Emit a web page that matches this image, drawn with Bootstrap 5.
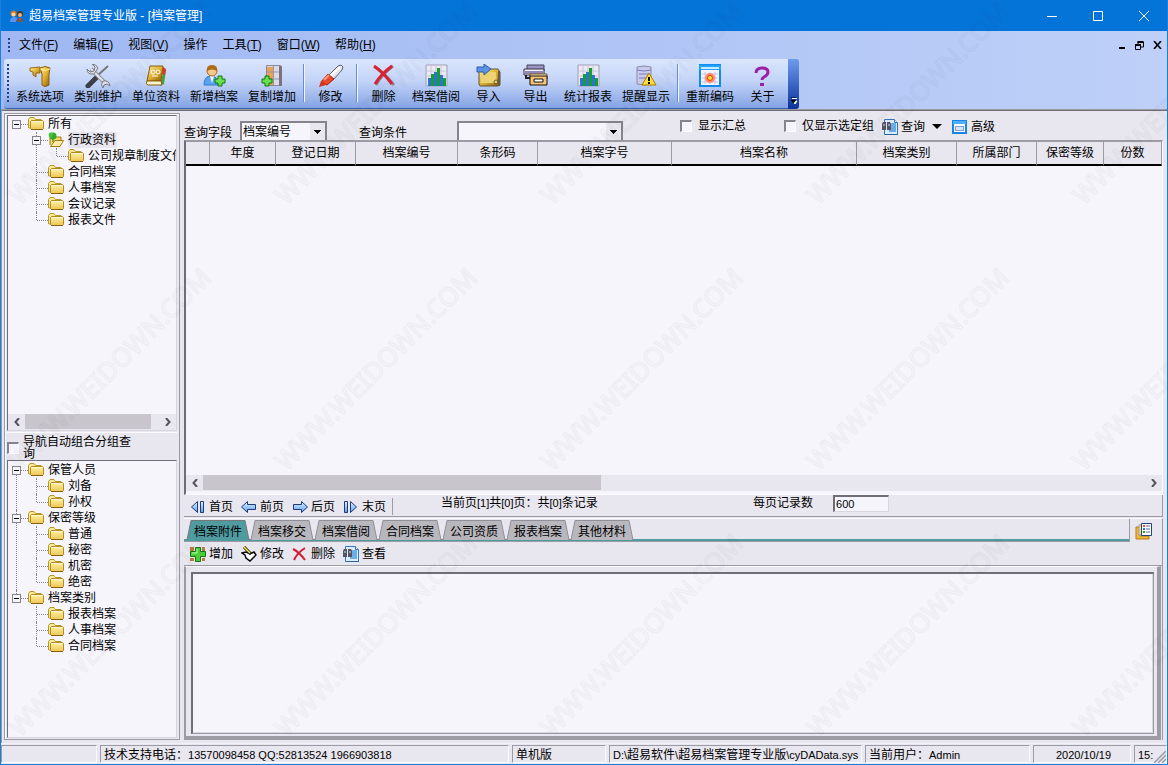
<!DOCTYPE html>
<html lang="zh-CN">
<head>
<meta charset="utf-8">
<meta name="viewport" content="width=device-width, initial-scale=1">
<title>超易档案管理专业版 - [档案管理]</title>
<link href="https://cdn.jsdelivr.net/npm/bootstrap@5.3.0/dist/css/bootstrap.min.css" rel="stylesheet">
<style>
:root{--face:#e8e6ee;--paper:#f7f5fc;--edge:#9c9aa3;--dark:#6f6d76;--lite:#fbfaff}
body{font:12px/16px "Liberation Sans","Noto Sans CJK SC",sans-serif;color:#000;background:var(--face)}
button,select,input{font:inherit;color:inherit;border-radius:0}
button{background:none;border:0;padding:0;white-space:nowrap}
.app{border:1px solid #1a7fdc;border-top:0;overflow:hidden}
svg{flex:none;display:block}
.defs{position:absolute}
/* title and menu */
.titlebar{height:31px;background:#0574d9;color:#fff;padding-left:8px}
.win-btn{width:46px;height:31px}
.menubar{height:28px;background:linear-gradient(90deg,#9fb8f3,#bed0f8);padding-left:7px}
.menubar .items{gap:15px;margin-left:9px}
.grip{width:2px;background:repeating-linear-gradient(#27408b 0 2px,transparent 2px 4px)}
.mdi{gap:9px;padding-right:5px}
/* big toolbar */
.bandrow{height:50px;background:linear-gradient(90deg,#9fb8f3,#bed0f8);padding-left:3px}
.band{background:linear-gradient(#dbe6fd,#c3d4f8 45%,#84a3e4);border-bottom:1px solid #3b61b1;border-radius:3px 0 0 3px;padding-left:3px;width:784px}
.tool{width:47px;padding-top:5px}
.tool.wide{width:58px}
.tool svg{margin:0 auto 1px}
.tool span{display:block}
.vsep{width:2px;height:38px;margin:5px 2px 0;border-left:1px solid #6a8cd0;border-right:1px solid #f2f6ff}
.more{width:11px;background:linear-gradient(#6f9bee,#0a3399);border-radius:0 3px 3px 0}
/* workspace */
.work{border-top:1px solid var(--edge);border-left:1px solid var(--edge);box-shadow:inset 0 1px var(--dark);padding:3px 4px 3px 2px;gap:4px}
.side{width:176px;border:1px solid var(--edge);padding:1px 2px;box-shadow:inset 1px 1px var(--lite)}
.sunk{background:var(--paper);border:1px solid #d8d6de;border-top-color:var(--dark);border-left-color:var(--dark)}
.tree2{flex:0 0 278px;padding-top:1px}
.tree,.tree ul{list-style:none;margin:0;padding:0}
.tree ul{padding-left:20px}
.tree li{position:relative}
.tree li::before{content:"";position:absolute;left:8px;top:0;bottom:0;border-left:1px dotted #85838c}
.tree li:last-child::before{bottom:auto;height:8px}
.tree>li:first-child::before{top:8px}
.tree>li:only-child::before{display:none}
.node{height:16px;padding-left:20px;white-space:nowrap}
.node::before{content:"";position:absolute;left:9px;top:8px;width:11px;border-top:1px dotted #85838c}
.node>span{margin-left:4px;padding:0 1px 0 0}
.node .on{background:var(--face)}
.pm{position:absolute;left:4px;top:4px;width:9px;height:9px;background:linear-gradient(#000,#000) 1px 3px/5px 1px no-repeat var(--paper);border:1px solid #85838c;z-index:1}
.hbar{height:16px;background:var(--face)}
.hbar button{width:17px;height:16px}
.thumb{background:#c8c5cd;height:15px}
.navopt{height:28px;border-top:1px solid var(--lite);line-height:12px;margin-top:1px;padding-top:2px}
.navopt label{width:112px}
/* own tick box look */
.tick{appearance:none;width:12px;height:12px;margin:0;flex:none;background:var(--paper);border:1px solid var(--lite);border-top:2px solid #85838c;border-left:2px solid #85838c}
.query{height:27px;overflow:hidden}
.combo{position:relative;height:19px}
.combo select{appearance:none;width:100%;height:19px;background:var(--paper);border:2px solid #85838c;border-bottom:0;padding:0 1px;line-height:14px}
.combo::after{content:"";position:absolute;right:2px;top:2px;width:15px;height:17px;background:linear-gradient(#000,#000) 4px 7px/7px 1px no-repeat,linear-gradient(#000,#000) 5px 8px/5px 1px no-repeat,linear-gradient(#000,#000) 6px 9px/3px 1px no-repeat,linear-gradient(#000,#000) 7px 10px/1px 1px no-repeat,var(--face);pointer-events:none}
.w-field{width:87px}.w-cond{width:166px;margin-left:50px}
.gap-l{margin-left:32px}
.low{margin-top:12px}
.high{margin-top:5px}
.check-a{margin-left:57px;gap:6px}
.check-b{margin-left:38px;gap:6px}
.find-btn{margin-left:8px}
.grid{background:var(--paper);border:1px solid var(--lite);border-top:2px solid var(--edge);border-left:2px solid var(--dark);overflow:hidden}
.grid table{width:100%;table-layout:fixed;border-collapse:separate;border-spacing:0}
.grid th{height:24px;background:var(--face);border-right:1px solid var(--edge);border-bottom:2px solid #000;padding:0;text-align:center;font-weight:400}
.c24{width:24px}.c66{width:66px}.c80{width:80px}.c102{width:102px}.c134{width:134px}.c185{width:185px}.c100{width:100px}.c67{width:67px}
.grid .hbar{margin-bottom:3px}
.gridthumb{width:398px}
.pager{height:22px;border-bottom:1px solid var(--edge);border-right:1px solid var(--edge)}
.pager nav{gap:8px;padding-left:6px;border-right:1px solid var(--edge);margin:3px 0 0;width:209px}
.act{gap:3px;height:17px}
.act svg{width:16px;height:16px}
.info{margin-left:48px;width:312px}
.per{width:56px;height:17px;padding:0 1px;margin-left:20px;background:var(--paper);border:2px solid var(--dark);border-right:1px solid #d8d6de;border-bottom:1px solid #d8d6de}
.sm11{font-size:11px}
.lower{margin-top:1px;border-right:1px solid var(--edge);border-top:1px solid var(--lite)}
.tabs{height:23px;padding-left:2px;border-bottom:1px solid var(--edge);border-right:1px solid var(--edge);box-shadow:inset 0 -2px #4f9ba0}
.tabbtn{width:64px;height:20px;padding:3px 0 0 8px;text-align:left;background:url("data:image/svg+xml,%3Csvg xmlns='http://www.w3.org/2000/svg' width='64' height='21'%3E%3Cpath d='M1 20L5 .5H59L63 20' fill='%23b9b7be' stroke='%23908e97'/%3E%3C/svg%3E") no-repeat;margin-top:1px}
.tabbtn.active{background-image:url("data:image/svg+xml,%3Csvg xmlns='http://www.w3.org/2000/svg' width='64' height='21'%3E%3Cpath d='M1 20L5 .5H59L63 20' fill='%234f9ba0' stroke='%23777'/%3E%3C/svg%3E")}
.albums{width:32px}
.acts{height:24px;gap:8px;padding:0 0 0 6px;border-bottom:1px solid var(--edge)}
.frame{height:174px;border:1px solid var(--lite);border-left:2px solid var(--edge);border-right:4px solid var(--edge);border-bottom:4px solid var(--edge);margin-right:1px;padding:5px 3px 2px 5px}
.frame .attach{border:1px solid var(--edge);border-top:2px solid var(--dark);border-left:2px solid var(--dark);box-shadow:inset -1px -1px #d8d6de;background:var(--paper)}
.status{height:21px;padding-top:1px;gap:3px;border-top:1px solid #f2f0f7}
.status>div{height:18px;border:1px solid var(--lite);border-top-color:var(--edge);border-left-color:var(--edge);padding:1px 0 0 3px;white-space:nowrap;overflow:hidden}
.s97{width:96px}.s94{width:94px}.s253{width:253px}.s166{width:165px}.s98{width:98px}.s33{width:33px}
.resize{right:1px;bottom:1px}
.wm{inset:0;pointer-events:none;z-index:9}
</style>
<script src="https://cdn.jsdelivr.net/npm/bootstrap@5.3.0/dist/js/bootstrap.bundle.min.js"></script>
</head>
<body>
<svg class="defs" width="0" height="0" aria-hidden="true">
<defs>
<linearGradient id="gold" x1="0" y1="0" x2="1" y2="1"><stop offset="0" stop-color="#fff3a0"/><stop offset=".5" stop-color="#e0b030"/><stop offset="1" stop-color="#8a5a08"/></linearGradient>
<linearGradient id="fold" x1="0" y1="0" x2="0" y2="1"><stop offset="0" stop-color="#fff2a8"/><stop offset="1" stop-color="#eec552"/></linearGradient>
<linearGradient id="blu" x1="0" y1="0" x2="0" y2="1"><stop offset="0" stop-color="#e0f2ff"/><stop offset="1" stop-color="#5aa0ea"/></linearGradient>
</defs>
<symbol id="folder" viewBox="0 0 16 16"><path d="M.500 12V3.500l1.500-2h4l1.500 2H13l1 1.500" fill="#ffe894" stroke="#b8962c"/><path d="M.500 11l2 2" stroke="#b8962c"/><path d="M2.500 5.500l1-1h11l1 1v7l-1 1h-11l-1-1z" fill="url(#fold)" stroke="#b48a1e"/><path d="M3.500 5.500h11" stroke="#fffad0"/><path d="M3 13.500h12" stroke="#86600c"/></symbol>
<symbol id="fopen" viewBox="0 0 16 16"><path d="M2 13V5h11v3" fill="#f3d873" stroke="#a87b12"/><path d="M2.500 14.500L7 8.500h8.500L12 14.500z" fill="#fff0a8" stroke="#a67a12"/><circle cx="5" cy="4" r="3.500" fill="#2cae22"/><circle cx="3" cy="3" r="2.400" fill="#46c23a"/><path d="M5 7v3" stroke="#1c7a14"/></symbol>
<symbol id="chart" viewBox="0 0 24 24"><path d="M2 1h21v21H2z" fill="#ece9f4" stroke="#a09fb5"/><path d="M2 7h20M2 12h20M7 2v19M12 2v19M17 2v19" stroke="#c8c6da"/><path d="M4 14h3v8H4zM10 8h3v14h-3zM16 11h3v11h-3z" fill="#2f6fe0"/><path d="M7 10h3v12H7zM13 4h3v18h-3zM19 14h3v8h-3z" fill="#16a02a"/></symbol>
<symbol id="plus" viewBox="0 0 12 12"><path d="M4 1h4v3h3v4H8v3H4V8H1V4h3z" fill="#6be04f" stroke="#117413"/></symbol>
<symbol id="find" viewBox="0 0 16 16"><path d="M2.500.500h10l3 3v12h-13z" fill="#dceeff" stroke="#3674b8"/><path d="M7 4h7v9H7z" fill="#69afe9"/><path d="M12.500.500v3h3" fill="#fff" stroke="#3674b8"/><path d="M0 5l1-2h3v8H0zM5 3h3l1 2v6H5z" fill="#555462"/><path d="M1 6h2M6 6h2" stroke="#d9e0f4"/><path d="M3 15.500h13" stroke="#27659c"/></symbol>
</svg>

<div class="app d-flex flex-column min-vh-100 position-relative">
<header class="titlebar d-flex align-items-center">
<svg width="16" height="16" viewBox="0 0 16 16"><circle cx="4.500" cy="5.500" r="3" fill="#c97a29"/><circle cx="4.500" cy="6.500" r="2" fill="#ffd6a0"/><path d="M1 14q0-5 4-5t4 5z" fill="#5b94ec"/><circle cx="11" cy="6" r="3" fill="#593018"/><circle cx="11" cy="7" r="2" fill="#f1b47c"/><path d="M7 14q0-4 4-4t4 4z" fill="#5d5c69"/><path d="M10 10h2l-1 3z" fill="#e43"/></svg>
<span class="ms-1">超易档案管理专业版 - [档案管理]</span>
<div class="ms-auto d-flex">
<button class="win-btn" aria-label="最小化"><svg class="m-auto" width="10" height="10"><path d="M0 5.500h10" stroke="#fff"/></svg></button>
<button class="win-btn" aria-label="最大化"><svg class="m-auto" width="10" height="10"><path d="M.500.500h9v9h-9z" fill="none" stroke="#fff"/></svg></button>
<button class="win-btn" aria-label="关闭"><svg class="m-auto" width="10" height="10"><path d="M0 0l10 10M10 0L0 10" stroke="#fff"/></svg></button>
</div>
</header>

<nav class="menubar d-flex align-items-center">
<i class="grip" style="height:14px"></i>
<div class="items d-flex">
<button>文件(<u>F</u>)</button><button>编辑(<u>E</u>)</button><button>视图(<u>V</u>)</button><button>操作</button><button>工具(<u>T</u>)</button><button>窗口(<u>W</u>)</button><button>帮助(<u>H</u>)</button>
</div>
<div class="mdi ms-auto d-flex">
<button aria-label="最小化文档"><svg width="8" height="8"><path d="M1 7h6" stroke="#000" stroke-width="2"/></svg></button>
<button aria-label="还原文档"><svg width="9" height="9"><path d="M3 3V1h5.500v5H6M.500 4h5v4.500h-5z" fill="none" stroke="#000"/><path d="M2.500 1h6M0 4h6" stroke="#000" stroke-width="2"/></svg></button>
<button aria-label="关闭文档"><svg width="9" height="8"><path d="M1 0l7 8M8 0L1 8" stroke="#000" stroke-width="1.600"/></svg></button>
</div>
</nav>

<div class="bandrow d-flex">
<div class="band d-flex align-items-start">
<i class="grip" style="height:38px;margin:5px 2px 0 0"></i>
<button class="tool wide"><svg width="24" height="24"><path d="M2 4l10-1v6H8v4L5 11V8L2 7z" fill="url(#gold)" stroke="#9b6a10"/><path d="M12 4q5-3 10 0l-1 6v11q-4 3-7 0V10z" fill="url(#gold)" stroke="#8a5c0c"/><path d="M12 5q5 3 10 0" fill="none" stroke="#fff3a0"/></svg><span>系统选项</span></button>
<button class="tool wide"><svg width="26" height="24"><path d="M3 22l9-9" stroke="#3e3e46" stroke-width="5" stroke-linecap="round"/><path d="M12 12L23 2" stroke="#777" stroke-width="2"/><path d="M6 5l15 15" stroke="#8f9097" stroke-width="4"/><path d="M6 5l15 15" stroke="#e4e5ec" stroke-width="2"/><path d="M2 5l3 3 4-1 1-4-3-3q4 0 6 4l-4 6Q2 11 2 5zM18 17q6-1 7 5l-3-2-3 1-1 3q-3-3 0-7z" fill="#dedfe8" stroke="#777880"/></svg><span>类别维护</span></button>
<button class="tool wide"><svg width="24" height="24"><path d="M20 4l2 2-2 14-4 2" fill="#4b9e38"/><path d="M19 3l3 2-1 6-3-1z" fill="#d33"/><path d="M6 2h13l-2 15H3z" fill="url(#gold)" stroke="#8a5c0c"/><path d="M3 17h14l1 4H4q-3-1-1-4z" fill="#fff6cf" stroke="#8a5c0c"/><circle cx="9" cy="8" r="2" fill="none" stroke="#fff"/><circle cx="14" cy="8" r="2" fill="none" stroke="#fff"/><path d="M8 12h6" stroke="#fff"/></svg><span>单位资料</span></button>
<button class="tool wide"><svg width="24" height="24"><path d="M2 21q0-9 7-9t7 9z" fill="#58a3f0" stroke="#3578ce"/><path d="M8 12l2 7 2-7z" fill="#fff"/><circle cx="10" cy="7" r="5" fill="#f7c888" stroke="#a86a1d"/><path d="M5 7Q4 1 10 1t5 6q-5-3-10 0z" fill="#b06b14"/><use href="#plus" x="12" y="11" width="12" height="12"/></svg><span>新增档案</span></button>
<button class="tool wide"><svg width="24" height="24"><path d="M6.500 1.500h14v20h-14z" fill="#dcdaea" stroke="#8b8795"/><path d="M7 3h6v18H7z" fill="#e9a452"/><path d="M13.500 2v19M7 8h13M7 15h13" stroke="#9a96a8"/><path d="M19 2h3v20h-3z" fill="#77737f"/><use href="#plus" x="1" y="11" width="12" height="12"/></svg><span>复制增加</span></button>
<i class="vsep"></i>
<button class="tool"><svg width="26" height="24"><path d="M10 12L20 2l3-1 2 2-1 3-9 10z" fill="#e6e5ee" stroke="#5e5c69"/><path d="M12 12L22 3" stroke="#fff" stroke-width="2"/><path d="M3 18l7-8 6 5-7 6z" fill="#e8492a" stroke="#a82211"/><path d="M3 17l5 4-7 2z" fill="#d33618"/><path d="M6 16l5-5" stroke="#ff9a80" stroke-width="2"/></svg><span>修改</span></button>
<i class="vsep"></i>
<button class="tool"><svg width="24" height="24"><path d="M3 3q9 6 19 18M21 2Q9 11 4 21" fill="none" stroke="#8d8790" stroke-width="3"/><path d="M2 2q9 6 18 18M20 2Q9 10 3 20" fill="none" stroke="#d92232" stroke-width="3"/></svg><span>删除</span></button>
<button class="tool wide"><svg width="24" height="24"><use href="#chart" width="24" height="24"/></svg><span>档案借阅</span></button>
<button class="tool"><svg width="26" height="24"><path d="M3 7l3-2h16l2 3v13l-2 1H4l-1-2z" fill="url(#gold)" stroke="#5d553f"/><path d="M5 8h15l1 11H5z" fill="#ebd272"/><path d="M22 7h2v15h-2z" fill="#665a3f"/><circle cx="20" cy="18" r="2" fill="none" stroke="#6c5a29"/><path d="M1 3h7V0l7 5-7 6V8H1z" fill="#5c92e8" stroke="#315da6"/></svg><span>导入</span></button>
<button class="tool"><svg width="25" height="24"><path d="M4 1h17v6H4z" fill="#9b94c6" stroke="#44405c"/><path d="M1 5h20v6H1z" fill="#f2f0ff" stroke="#333"/><path d="M2 7h18v3H2z" fill="#8d88b8"/><path d="M7 10h17v5H7z" fill="#fff0cb" stroke="#7d4d12"/><path d="M7 12h17v9H7z" fill="#fac573" stroke="#111"/><path d="M11 15h9v3h-9z" fill="#fff" stroke="#111"/><path d="M3 11v3h4" fill="none" stroke="#222" stroke-width="2"/></svg><span>导出</span></button>
<button class="tool wide"><svg width="24" height="24"><use href="#chart" width="24" height="24"/></svg><span>统计报表</span></button>
<button class="tool wide"><svg width="24" height="24"><path d="M3 3q7-2 14 0v17q-7 2-14 0z" fill="#c9cbec" stroke="#8c8aa9"/><path d="M3 6q7 2 14 0M5 10h9M5 14h7" fill="none" stroke="#7c7ac0"/><path d="M15 9l7 12H8z" fill="#ffe23e" stroke="#ac7c00"/><path d="M15 13v4M15 18v2" stroke="#000" stroke-width="2"/></svg><span>提醒显示</span></button>
<i class="vsep"></i>
<button class="tool wide"><svg width="24" height="24"><path d="M2 1h20v21H2z" fill="#f5f3ff" stroke="#0f8bef" stroke-width="2"/><path d="M1 1h22v5H1z" fill="#27a0fb"/><path d="M3 4h18" stroke="#c7edff" stroke-width="2"/><path d="M4 10h16M4 14h16M4 18h16M7 8v12M12 8v12M17 8v12" stroke="#c5c6e2"/><circle cx="12" cy="14" r="5" fill="#ff8b64"/><circle cx="12" cy="14" r="2.500" fill="#ffe128" stroke="#e43b20"/></svg><span>重新编码</span></button>
<button class="tool"><svg width="24" height="24"><path d="M5 9q0-5 6-5t6 4q0 3-4 5-2 1-2 3" fill="none" stroke="#9b20a6" stroke-width="3"/><path d="M9 19h4v3H9z" fill="#9b20a6"/></svg><span>关于</span></button>
</div>
<button class="more d-flex align-items-end justify-content-center pb-1" aria-label="更多按钮"><svg width="8" height="8"><path d="M2 1.500h5M3 4h4l-2 3z" stroke="#fff" fill="#fff"/><path d="M1 .500h5M1 3h5L3.500 6z" fill="#000" stroke="#000" stroke-width=".5"/></svg></button>
</div>

<main class="work d-flex flex-grow-1">
<aside class="side d-flex flex-column">
<div class="sunk flex-grow-1 d-flex flex-column overflow-hidden">
<ul class="tree flex-grow-1">
<li><div class="node d-flex"><button class="pm" aria-label="折叠"></button><svg width="16" height="16"><use href="#folder"/></svg><span>所有</span></div>
<ul>
<li><div class="node d-flex"><button class="pm" aria-label="折叠"></button><svg width="16" height="16"><use href="#fopen"/></svg><span class="on">行政资料</span></div>
<ul><li><div class="node d-flex"><svg width="16" height="16"><use href="#folder"/></svg><span>公司规章制度文件</span></div></li></ul></li>
<li><div class="node d-flex"><svg width="16" height="16"><use href="#folder"/></svg><span>合同档案</span></div></li>
<li><div class="node d-flex"><svg width="16" height="16"><use href="#folder"/></svg><span>人事档案</span></div></li>
<li><div class="node d-flex"><svg width="16" height="16"><use href="#folder"/></svg><span>会议记录</span></div></li>
<li><div class="node d-flex"><svg width="16" height="16"><use href="#folder"/></svg><span>报表文件</span></div></li>
</ul></li>
</ul>
<div class="hbar d-flex justify-content-between">
<button aria-label="向左"><svg class="m-auto" width="6" height="8"><path d="M5 0L1.500 4 5 8" fill="none" stroke="#55535c" stroke-width="2"/></svg></button>
<div class="thumb flex-grow-1 me-2"></div>
<button aria-label="向右"><svg class="m-auto" width="6" height="8"><path d="M1 0l3.500 4L1 8" fill="none" stroke="#55535c" stroke-width="2"/></svg></button>
</div>
</div>
<div class="navopt d-flex align-items-center"><input class="tick" type="checkbox" id="autoNav"><label class="ms-1" for="autoNav">导航自动组合分组查询</label></div>
<div class="sunk tree2">
<ul class="tree">
<li><div class="node d-flex"><button class="pm" aria-label="折叠"></button><svg width="16" height="16"><use href="#folder"/></svg><span>保管人员</span></div>
<ul>
<li><div class="node d-flex"><svg width="16" height="16"><use href="#folder"/></svg><span>刘备</span></div></li>
<li><div class="node d-flex"><svg width="16" height="16"><use href="#folder"/></svg><span>孙权</span></div></li>
</ul></li>
<li><div class="node d-flex"><button class="pm" aria-label="折叠"></button><svg width="16" height="16"><use href="#folder"/></svg><span>保密等级</span></div>
<ul>
<li><div class="node d-flex"><svg width="16" height="16"><use href="#folder"/></svg><span>普通</span></div></li>
<li><div class="node d-flex"><svg width="16" height="16"><use href="#folder"/></svg><span>秘密</span></div></li>
<li><div class="node d-flex"><svg width="16" height="16"><use href="#folder"/></svg><span>机密</span></div></li>
<li><div class="node d-flex"><svg width="16" height="16"><use href="#folder"/></svg><span>绝密</span></div></li>
</ul></li>
<li><div class="node d-flex"><button class="pm" aria-label="折叠"></button><svg width="16" height="16"><use href="#folder"/></svg><span>档案类别</span></div>
<ul>
<li><div class="node d-flex"><svg width="16" height="16"><use href="#folder"/></svg><span>报表档案</span></div></li>
<li><div class="node d-flex"><svg width="16" height="16"><use href="#folder"/></svg><span>人事档案</span></div></li>
<li><div class="node d-flex"><svg width="16" height="16"><use href="#folder"/></svg><span>合同档案</span></div></li>
</ul></li>
</ul>
</div>
</aside>

<section class="flex-grow-1 d-flex flex-column overflow-hidden">
<form class="query d-flex align-items-start text-nowrap">
<label class="low" for="field">查询字段</label>
<div class="combo w-field mt-2 ms-2"><select id="field"><option>档案编号</option></select></div>
<label class="low gap-l" for="cond">查询条件</label>
<div class="combo w-cond mt-2"><select id="cond"><option></option></select></div>
<div class="high check-a d-flex align-items-center"><input class="tick" type="checkbox" id="sum"><label for="sum">显示汇总</label></div>
<div class="high check-b d-flex align-items-center"><input class="tick" type="checkbox" id="only"><label for="only">仅显示选定组</label></div>
<button type="button" class="act high find-btn d-flex align-items-center"><svg><use href="#find"/></svg>查询<svg class="ms-1" viewBox="0 0 16 16"><path d="M0 5h10L5 10z"/></svg></button>
<button type="button" class="act high d-flex align-items-center ms-1"><svg viewBox="0 0 16 16"><path d="M1 2h13v12H1z" fill="#fff" stroke="#1685e8" stroke-width="2"/><path d="M1 2h13v3H1z" fill="#4cb0ff"/><path d="M3.500 7.500h8v4h-8z" fill="#d2e5ff" stroke="#1e45b0" stroke-dasharray="1 1"/></svg>高级</button>
</form>

<div class="grid flex-grow-1 d-flex flex-column">
<table>
<thead><tr><th class="c24"></th><th class="c66">年度</th><th class="c80">登记日期</th><th class="c102">档案编号</th><th class="c80">条形码</th><th class="c134">档案字号</th><th class="c185">档案名称</th><th class="c100">档案类别</th><th class="c80">所属部门</th><th class="c67">保密等级</th><th>份数</th></tr></thead>
</table>
<div class="hbar d-flex mt-auto">
<button aria-label="向左"><svg class="m-auto" width="6" height="8"><path d="M5 0L1.500 4 5 8" fill="none" stroke="#55535c" stroke-width="2"/></svg></button>
<div class="thumb gridthumb"></div>
<button class="ms-auto" aria-label="向右"><svg class="m-auto" width="6" height="8"><path d="M1 0l3.500 4L1 8" fill="none" stroke="#55535c" stroke-width="2"/></svg></button>
</div>
</div>

<div class="pager d-flex align-items-start text-nowrap">
<nav class="d-flex">
<button class="act d-flex align-items-center"><svg viewBox="0 0 16 16"><path d="M7.500 2.500v11L1.500 8zM10.500 2.500h3v11h-3z" fill="url(#blu)" stroke="#203a78"/></svg>首页</button>
<button class="act d-flex align-items-center"><svg viewBox="0 0 16 16"><path d="M.500 8l6-5.500v3h8v5h-8v3z" fill="url(#blu)" stroke="#203a78"/></svg>前页</button>
<button class="act d-flex align-items-center"><svg viewBox="0 0 16 16"><path d="M15.500 8l-6-5.500v3h-8v5h8v3z" fill="url(#blu)" stroke="#203a78"/></svg>后页</button>
<button class="act d-flex align-items-center"><svg viewBox="0 0 16 16"><path d="M7.500 2.500v11l6-5.500zM1.500 2.500h3v11h-3z" fill="url(#blu)" stroke="#203a78"/></svg>末页</button>
</nav>
<span class="info">当前页<span class="sm11">[1]</span>共<span class="sm11">[0]</span>页：共<span class="sm11">[0]</span>条记录</span>
<label for="per">每页记录数</label><input id="per" class="per sm11" value="600">
</div>

<div class="lower">
<div class="d-flex">
<div class="tabs d-flex flex-grow-1" role="tablist">
<button class="tabbtn active" role="tab">档案附件</button><button class="tabbtn" role="tab">档案移交</button><button class="tabbtn" role="tab">档案借阅</button><button class="tabbtn" role="tab">合同档案</button><button class="tabbtn" role="tab">公司资质</button><button class="tabbtn" role="tab">报表档案</button><button class="tabbtn" role="tab">其他材料</button>
</div>
<button class="albums" aria-label="列表"><svg width="18" height="18" style="margin:0 0 0 5px"><path d="M1 5h4v9h9v3H1z" fill="#edb73c" stroke="#b97b10"/><path d="M4 3h3v10H4z" fill="#f8de92" stroke="#9c9aa3"/><path d="M6.500 1.500h10v12h-10z" fill="#fff" stroke="#24427b"/><path d="M8 4h2" stroke="#f44" stroke-width="2"/><path d="M8 7h2" stroke="#18f" stroke-width="2"/><path d="M8 10h2" stroke="#2a3" stroke-width="2"/><path d="M11 4h4M11 7h4M11 10h4" stroke="#57679a"/></svg></button>
</div>
<div class="acts d-flex align-items-center">
<button class="act d-flex align-items-center"><svg viewBox="0 0 16 16"><path d="M0 1h4v4H0zM12 1h3v4h-3zM0 12h4v3H0zM12 12h3v3h-3z" fill="#b87a42"/><path d="M5.500 1.500h5v4h5v5h-5v5h-5v-5h-5v-5h5z" fill="#4dcf3a" stroke="#147614"/><path d="M7 3v4H2" fill="none" stroke="#c0ffaa"/></svg>增加</button>
<button class="act d-flex align-items-center"><svg viewBox="0 0 16 16"><path d="M1 7l4-1 4 2 4-2 2 3-6 6-4-3-1-3z" fill="#fff" stroke="#000" stroke-width="1.400"/><path d="M3 1l7 7" stroke="#222" stroke-width="3"/><path d="M3 1l6 6" stroke="#f7e634" stroke-width="1.500"/></svg>修改</button>
<button class="act d-flex align-items-center"><svg viewBox="0 0 16 16"><path d="M1 3q6 3 12 11M13 2Q5 7 2 14" fill="none" stroke="#d41d37" stroke-width="2"/></svg>删除</button>
<button class="act d-flex align-items-center"><svg viewBox="0 0 16 16"><use href="#find"/></svg>查看</button>
</div>
<div class="frame"><div class="attach h-100"></div></div>
</div>
</section>
</main>

<footer class="status d-flex position-relative">
<div class="s97"></div>
<div class="flex-grow-1">技术支持电话：<span class="sm11">13570098458 QQ:52813524 1966903818</span></div>
<div class="s94">单机版</div>
<div class="s253"><span class="sm11">D:\</span>超易软件<span class="sm11">\</span>超易档案管理专业版<span class="sm11">\cyDAData.sys</span></div>
<div class="s166">当前用户：<span class="sm11">Admin</span></div>
<div class="s98 text-center sm11">2020/10/19</div>
<div class="s33 sm11">15:</div>
<svg class="resize position-absolute" width="12" height="12"><path d="M0 12L12 0M4 12l8-8M8 12l4-4" stroke="#9c9aa3" stroke-width="1.500"/></svg>
</footer>

<svg class="wm position-absolute" width="100%" height="100%" aria-hidden="true">
<defs><pattern id="mark-tile" width="266" height="266" y="-26" patternUnits="userSpaceOnUse"><text transform="translate(19 232) rotate(-45)" font-family="Noto Sans, sans-serif" font-size="26" fill="none" stroke="#000" stroke-opacity=".03" stroke-width="1.500">WWW.WEIDOWN.COM</text></pattern></defs>
<rect width="100%" height="100%" fill="url(#mark-tile)"/>
</svg>
</div>
</body>
</html>
